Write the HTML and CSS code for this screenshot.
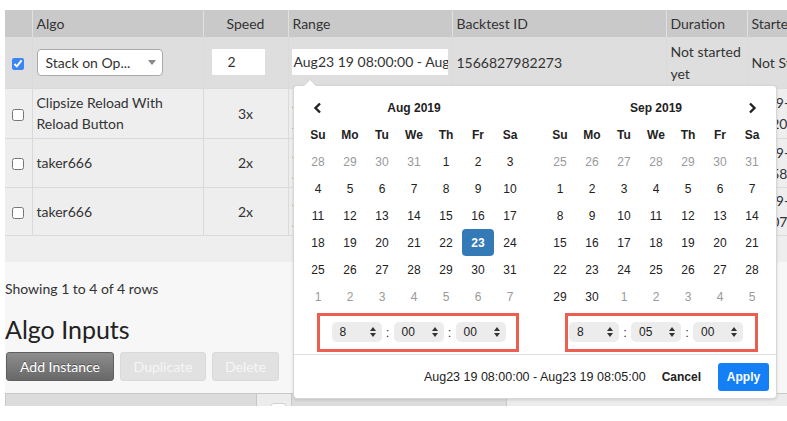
FILE: index.html
```html
<!DOCTYPE html>
<html lang="en">
<head>
<meta charset="utf-8">
<title>Algo Backtests</title>
<link rel="stylesheet" href="styles.css">
</head>
<body>
<div class="page">
  <div class="panel">
    <div class="grid-wrap">
      <table class="grid">
        <colgroup>
          <col class="w-chk"><col class="w-algo"><col class="w-speed"><col class="w-range"><col class="w-bt"><col class="w-dur"><col class="w-start">
        </colgroup>
        <thead>
          <tr>
            <th></th><th>Algo</th><th class="center">Speed</th><th>Range</th><th>Backtest ID</th><th>Duration</th><th>Started</th>
          </tr>
        </thead>
        <tbody>
          <tr class="row sel">
            <td class="chk"><input type="checkbox" checked></td>
            <td><div class="sel-box"><span>Stack on Op...</span><span class="tri"></span></div></td>
            <td><div class="num-input">2</div></td>
            <td><div class="range-input">Aug23 19 08:00:00 - Aug23 19 08:05:00</div></td>
            <td>1566827982273</td>
            <td>Not started yet</td>
            <td class="nowrap">Not Started</td>
          </tr>
          <tr class="row r2">
            <td class="chk"><input type="checkbox"></td>
            <td>Clipsize Reload With Reload Button</td>
            <td class="center">3x</td>
            <td>Aug26 19 12:20:00 - Aug26 19 12:25:00</td>
            <td>1566822011305</td>
            <td>0:04:58</td>
            <td>2019-08-26 12:20:11</td>
          </tr>
          <tr class="row r3">
            <td class="chk"><input type="checkbox"></td>
            <td>taker666</td>
            <td class="center">2x</td>
            <td>Aug26 19 12:58:00 - Aug26 19 13:03:00</td>
            <td>1566824320417</td>
            <td>0:05:01</td>
            <td>2019-08-26 12:58:40</td>
          </tr>
          <tr class="row r4">
            <td class="chk"><input type="checkbox"></td>
            <td>taker666</td>
            <td class="center">2x</td>
            <td>Aug26 19 12:07:00 - Aug26 19 12:12:00</td>
            <td>1566821252968</td>
            <td>0:05:00</td>
            <td>2019-08-26 12:07:32</td>
          </tr>
        </tbody>
      </table>
    </div>
    <div class="showing">Showing 1 to 4 of 4 rows</div>
    <h2 class="title">Algo Inputs</h2>
    <div class="btns">
      <button class="btn btn-dark">Add Instance</button>
      <button class="btn btn-off">Duplicate</button>
      <button class="btn btn-off">Delete</button>
    </div>
    <div class="sub-table">
      <div class="s1"></div>
      <div class="s2"><span class="fake-chk"></span></div>
      <div class="s3"></div>
      <div class="s4"></div>
    </div>
  </div>

  <div class="drp">
    <div class="cals">
      <div class="cal cal-left">
        <table class="ct">
          <colgroup><col class="dc"><col class="dc"><col class="dc"><col class="dc"><col class="dc"><col class="dc"><col class="dc"></colgroup>
          <thead>
            <tr><th><svg class="chev" width="10" height="12" viewBox="0 0 10 12"><polyline points="7,1.5 2.5,6 7,10.5"/></svg></th><th colspan="5">Aug 2019</th><th></th></tr>
            <tr><th>Su</th><th>Mo</th><th>Tu</th><th>We</th><th>Th</th><th>Fr</th><th>Sa</th></tr>
          </thead>
          <tbody>
            <tr><td class="off">28</td><td class="off">29</td><td class="off">30</td><td class="off">31</td><td>1</td><td>2</td><td>3</td></tr>
            <tr><td>4</td><td>5</td><td>6</td><td>7</td><td>8</td><td>9</td><td>10</td></tr>
            <tr><td>11</td><td>12</td><td>13</td><td>14</td><td>15</td><td>16</td><td>17</td></tr>
            <tr><td>18</td><td>19</td><td>20</td><td>21</td><td>22</td><td class="active">23</td><td>24</td></tr>
            <tr><td>25</td><td>26</td><td>27</td><td>28</td><td>29</td><td>30</td><td>31</td></tr>
            <tr><td class="off">1</td><td class="off">2</td><td class="off">3</td><td class="off">4</td><td class="off">5</td><td class="off">6</td><td class="off">7</td></tr>
          </tbody>
        </table>
        <div class="time time-left">
          <div class="tsel"><span>8</span><svg class="ud" width="6" height="10" viewBox="0 0 6 10"><path d="M0 4 L3 0 L6 4 Z M0 6 L3 10 L6 6 Z"/></svg></div>
          <span class="colon">:</span>
          <div class="tsel"><span>00</span><svg class="ud" width="6" height="10" viewBox="0 0 6 10"><path d="M0 4 L3 0 L6 4 Z M0 6 L3 10 L6 6 Z"/></svg></div>
          <span class="colon">:</span>
          <div class="tsel"><span>00</span><svg class="ud" width="6" height="10" viewBox="0 0 6 10"><path d="M0 4 L3 0 L6 4 Z M0 6 L3 10 L6 6 Z"/></svg></div>
        </div>
      </div>
      <div class="cal cal-right">
        <table class="ct">
          <colgroup><col class="dc"><col class="dc"><col class="dc"><col class="dc"><col class="dc"><col class="dc"><col class="dc"></colgroup>
          <thead>
            <tr><th></th><th colspan="5">Sep 2019</th><th><svg class="chev" width="10" height="12" viewBox="0 0 10 12"><polyline points="3,1.5 7.5,6 3,10.5"/></svg></th></tr>
            <tr><th>Su</th><th>Mo</th><th>Tu</th><th>We</th><th>Th</th><th>Fr</th><th>Sa</th></tr>
          </thead>
          <tbody>
            <tr><td class="off">25</td><td class="off">26</td><td class="off">27</td><td class="off">28</td><td class="off">29</td><td class="off">30</td><td class="off">31</td></tr>
            <tr><td>1</td><td>2</td><td>3</td><td>4</td><td>5</td><td>6</td><td>7</td></tr>
            <tr><td>8</td><td>9</td><td>10</td><td>11</td><td>12</td><td>13</td><td>14</td></tr>
            <tr><td>15</td><td>16</td><td>17</td><td>18</td><td>19</td><td>20</td><td>21</td></tr>
            <tr><td>22</td><td>23</td><td>24</td><td>25</td><td>26</td><td>27</td><td>28</td></tr>
            <tr><td>29</td><td>30</td><td class="off">1</td><td class="off">2</td><td class="off">3</td><td class="off">4</td><td class="off">5</td></tr>
          </tbody>
        </table>
        <div class="time">
          <div class="tsel"><span>8</span><svg class="ud" width="6" height="10" viewBox="0 0 6 10"><path d="M0 4 L3 0 L6 4 Z M0 6 L3 10 L6 6 Z"/></svg></div>
          <span class="colon">:</span>
          <div class="tsel"><span>05</span><svg class="ud" width="6" height="10" viewBox="0 0 6 10"><path d="M0 4 L3 0 L6 4 Z M0 6 L3 10 L6 6 Z"/></svg></div>
          <span class="colon">:</span>
          <div class="tsel"><span>00</span><svg class="ud" width="6" height="10" viewBox="0 0 6 10"><path d="M0 4 L3 0 L6 4 Z M0 6 L3 10 L6 6 Z"/></svg></div>
        </div>
      </div>
    </div>
    <div class="drp-foot">
      <span class="drp-range">Aug23 19 08:00:00 - Aug23 19 08:05:00</span>
      <button class="btn-cancel">Cancel</button>
      <button class="btn-apply">Apply</button>
    </div>
    <div class="mark mark-left"></div>
    <div class="mark mark-right"></div>
  </div>
</div>
</body>
</html>
```

FILE: styles.css
```css
* { box-sizing: border-box; }
html, body { margin: 0; padding: 0; background: #fff; }
body {
  font-family: Lato, "Open Sans", sans-serif;
  font-size: 14px;
  color: #333;
}
.page {
  position: relative;
  width: 787px;
  height: 421px;
  overflow: hidden;
  padding-top: 10px;
}
.panel {
  margin-left: 5px;
  height: 396px;
  background: #f7f7f7;
  overflow: hidden;
}

/* main grid */
.grid-wrap {
  height: 252px;
  background: #eeeeee;
  overflow: hidden;
}
.grid {
  border-collapse: collapse;
  table-layout: fixed;
  width: 832px;
}
.w-chk { width: 27px; }
.w-algo { width: 171px; }
.w-speed { width: 85px; }
.w-range { width: 164px; }
.w-bt { width: 214px; }
.w-dur { width: 81px; }
.w-start { width: 90px; }

.grid th {
  height: 27px;
  padding: 0 4px;
  background: #c9c9c9;
  font-weight: normal;
  text-align: left;
  color: #333;
  border-right: 1px solid #e0e0e0;
  white-space: nowrap;
  overflow: hidden;
}
.grid td {
  padding: 0 4px;
  line-height: 21px;
  vertical-align: middle;
  border-right: 1px solid #dadada;
  border-bottom: 1px solid #dadada;
  overflow: hidden;
}
.grid .center { text-align: center; }
.grid .nowrap { white-space: nowrap; }
.grid td.chk { padding: 0; text-align: center; }
.chk input { margin: 0; width: 12px; height: 12px; vertical-align: middle; accent-color: #3a86f4; }
.row.sel td { background: #dedede; height: 51px; line-height: 22px; padding-top: 2px; }
.row.sel td.chk { padding-top: 0; }
.row.r2 td { height: 50px; }
.row.r3 td { height: 49px; }
.row.r4 td { height: 48px; }

.sel-box {
  display: flex;
  align-items: center;
  justify-content: space-between;
  width: 126px;
  height: 27px;
  margin-top: -1px;
  background: #fff;
  border: 1px solid #aaa;
  border-radius: 4px;
  padding: 0 6px 0 8px;
  white-space: nowrap;
}
.tri {
  width: 0; height: 0;
  border-left: 4px solid transparent;
  border-right: 4px solid transparent;
  border-top: 5px solid #888;
}
.num-input {
  width: 53px;
  height: 26px;
  margin-top: -2px;
  margin-left: 4px;
  background: #fff;
  padding-left: 16px;
  line-height: 26px;
}
.range-input {
  width: 156px;
  height: 26px;
  margin-top: -2px;
  margin-left: -1px;
  background: #fff;
  padding-left: 2px;
  line-height: 26px;
  white-space: nowrap;
  overflow: hidden;
}

/* below grid */
.showing {
  padding-top: 18px;
  line-height: 17px;
}
.title {
  margin: 18px 0 0;
  font-size: 25px;
  font-weight: normal;
  line-height: 28px;
  color: #222;
}
.btns {
  display: flex;
  gap: 6px;
  margin-top: 9px;
  padding-left: 1px;
}
.btn {
  height: 29px;
  padding: 0 12px;
  font-family: inherit;
  font-size: 14px;
  border-radius: 3px;
}
.btn-dark {
  width: 108px;
  color: #fff;
  background: linear-gradient(#8d8d8d, #686868);
  border: 1px solid #5f5f5f;
  text-shadow: 0 -1px 0 rgba(0,0,0,0.35);
}
.btn-off {
  color: #f6f6f6;
  background: #e1e1e1;
  border: 1px solid #d9d9d9;
}
.btns .btn-off:nth-child(2) { width: 86px; }
.btns .btn-off:nth-child(3) { width: 67px; }
.sub-table {
  display: flex;
  height: 20px;
  margin-top: 12px;
  border-top: 1px solid #c8c8c8;
  border-left: 1px solid #c8c8c8;
}
.s1 { width: 250px; background: #dcdcdc; }
.s2 { width: 35px; background: #ececec; border-left: 1px solid #c8c8c8; padding: 9px 0 0 13px; }
.s3 { width: 215px; background: #dcdcdc; border-left: 1px solid #c8c8c8; }
.s4 { flex: 1; background: #ececec; border-left: 1px solid #c8c8c8; }
.fake-chk {
  display: block;
  width: 17px;
  height: 17px;
  background: #fff;
  border: 1px solid #d0d0d0;
  border-radius: 4px;
}

/* date range picker popup */
.drp {
  position: absolute;
  left: 293px;
  top: 85px;
  width: 484px;
  background: #fff;
  border: 1px solid #d6d6d6;
  border-radius: 4px;
  box-shadow: 0 1px 3px rgba(0,0,0,0.12);
  font-family: "Liberation Sans", Arial, sans-serif;
  font-size: 12px;
  color: #222;
}
.drp::before {
  content: "";
  position: absolute;
  top: -7px;
  left: 9px;
  border-left: 7px solid transparent;
  border-right: 7px solid transparent;
  border-bottom: 7px solid #d0d0d0;
}
.drp::after {
  content: "";
  position: absolute;
  top: -6px;
  left: 10px;
  border-left: 6px solid transparent;
  border-right: 6px solid transparent;
  border-bottom: 6px solid #fff;
}
.cals {
  display: flex;
  gap: 18px;
  padding: 8px 8px 0 8px;
}
.ct {
  border-collapse: separate;
  border-spacing: 0;
  table-layout: fixed;
  width: 224px;
}
.dc { width: 32px; }
.ct th, .ct td {
  height: 27px;
  padding: 0;
  text-align: center;
  vertical-align: middle;
  font-size: 12px;
  white-space: nowrap;
}
.ct th { font-weight: bold; color: #222; }
.ct td { color: #222; }
.ct td.off { color: #999; }
.ct td.active {
  background: #337ab7;
  color: #fff;
  font-weight: bold;
  border-radius: 4px;
}
.chev {
  display: block;
  margin: 0 auto;
  fill: none;
  stroke: #222;
  stroke-width: 2.4;
}
.time {
  display: flex;
  align-items: center;
  justify-content: center;
  height: 44px;
}
.time-left { padding-left: 9px; }
.tsel {
  display: flex;
  align-items: center;
  justify-content: space-between;
  width: 50px;
  height: 20px;
  background: #ececec;
  border-radius: 5px;
  padding: 0 6px 0 8px;
  font-size: 12px;
  color: #222;
}
.ud { display: block; fill: #333; }
.colon {
  width: 12px;
  text-align: center;
  font-size: 13px;
  color: #333;
}
.drp-foot {
  display: flex;
  justify-content: flex-end;
  align-items: center;
  border-top: 1px solid #ddd;
  padding: 8px 7px 7px 8px;
}
.drp-range { margin-right: 16px; color: #222; font-size: 12.5px; }
.btn-cancel, .btn-apply {
  border: none;
  padding: 0;
  font-family: inherit;
  font-size: 12px;
  font-weight: bold;
}
.btn-cancel {
  background: none;
  color: #222;
  margin-right: 17px;
}
.btn-apply {
  width: 51px;
  height: 28px;
  background: #1580f6;
  color: #fff;
  border-radius: 3px;
}
.mark {
  position: absolute;
  top: 227px;
  height: 39px;
  border: 3px solid #ec5f50;
}
.mark-left { left: 23px; width: 202px; }
.mark-right { left: 271px; width: 193px; }
```
